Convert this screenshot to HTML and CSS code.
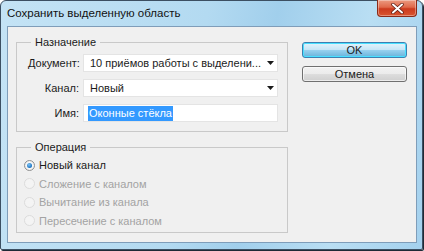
FILE: index.html
```html
<!DOCTYPE html>
<html lang="ru">
<head>
  <meta charset="UTF-8">
  <title>Сохранить выделенную область</title>
  <link rel="stylesheet" href="styles.css">
</head>
<body>
  <div class="window">
    <!-- Title bar -->
    <div class="titlebar">
      <span class="title">Сохранить выделенную область</span>
      <button class="close" type="button" aria-label="Закрыть">
        <svg width="13" height="11" viewBox="0 0 13 11">
          <path d="M2 1.5 L11 9.5 M11 1.5 L2 9.5" stroke="#5a1a10" stroke-width="3.4" stroke-linecap="round"/>
          <path d="M2 1.5 L11 9.5 M11 1.5 L2 9.5" stroke="#ffffff" stroke-width="2" stroke-linecap="round"/>
        </svg>
      </button>
    </div>

    <div class="client">
      <div class="groups">
        <fieldset class="group dest">
          <legend>Назначение</legend>
          <div class="row">
            <span class="label">Документ:</span>
            <div class="combo">
              <span>10 приёмов работы с выделени...</span>
              <svg class="arrow" width="7" height="4" viewBox="0 0 7 4"><path d="M0 0 H7 L3.5 4 Z" fill="#1a1a1a"/></svg>
            </div>
          </div>
          <div class="row">
            <span class="label">Канал:</span>
            <div class="combo">
              <span>Новый</span>
              <svg class="arrow" width="7" height="4" viewBox="0 0 7 4"><path d="M0 0 H7 L3.5 4 Z" fill="#1a1a1a"/></svg>
            </div>
          </div>
          <div class="row">
            <span class="label">Имя:</span>
            <div class="textbox"><span class="selected">Оконные стёкла</span></div>
          </div>
        </fieldset>

        <fieldset class="group operation">
          <legend>Операция</legend>
          <div class="radio checked"><span class="dot"></span>Новый канал</div>
          <div class="radio disabled"><span class="dot"></span>Сложение с каналом</div>
          <div class="radio disabled"><span class="dot"></span>Вычитание из канала</div>
          <div class="radio disabled"><span class="dot"></span>Пересечение с каналом</div>
        </fieldset>
      </div>

      <div class="buttons">
        <button class="btn default" type="button">OK</button>
        <button class="btn" type="button">Отмена</button>
      </div>
    </div>
  </div>
</body>
</html>
```

FILE: styles.css
```css
:root {
  --client-bg: #f0f0f0;
  --group-line: #c9c9c9;
  --text: #1b1b1b;
  --disabled: #a3a3a3;
  --highlight: #3399ff;
  --font-ui: "Liberation Sans", Arial, sans-serif;
}
*, *::before, *::after {
  box-sizing: border-box;
  margin: 0;
  padding: 0;
}
body {
  width: 424px;
  height: 251px;
  background: #ffffff;
  font-family: var(--font-ui);
  font-size: 11px;
  color: var(--text);
  overflow: hidden;
}
.window {
  width: 423px;
  height: 250px;
  display: flex;
  flex-direction: column;
  border: 1px solid #3c4f62;
  border-radius: 6px 6px 2px 2px;
  background: linear-gradient(100deg, #c4e3f5 0%, #b3daf1 45%, #a1cfec 60%, #b9def3 80%, #a4d1ee 100%);
  box-shadow: 1px 1px 0 #1e2a36;
}
.titlebar {
  height: 26px;
  display: flex;
  align-items: flex-start;
  justify-content: space-between;
  padding-left: 6px;
}
.title {
  margin-top: 6px;
  font-size: 11.5px;
  color: #111;
}
.close {
  width: 40px;
  height: 17px;
  margin-top: -1px;
  margin-right: 5px;
  display: flex;
  align-items: center;
  justify-content: center;
  border: 1px solid #8a2a18;
  border-top: none;
  border-radius: 0 0 4px 4px;
  background: linear-gradient(#eb9a80 0%, #e0694a 45%, #cc3a1d 55%, #d9552f 100%);
  box-shadow: inset 0 0 0 1px rgba(255,255,255,0.35);
}
.client {
  flex: 1;
  margin: 0 5px 6px 6px;
  background: var(--client-bg);
  border: 1px solid #7f9db9;
  display: flex;
  padding: 7px 9px 9px 8px;
}
.groups {
  display: flex;
  flex-direction: column;
  gap: 7px;
}
.group {
  width: 272px;
  border: 1px solid var(--group-line);
  padding: 0 8px 0 11px;
}
.group legend {
  margin-left: 3px;
  padding: 0 4px;
  line-height: 16px;
}
.dest {
  height: 98px;
  display: flex;
  flex-direction: column;
  gap: 7px;
  padding-top: 4px;
}
.row {
  display: flex;
  align-items: center;
  gap: 4px;
}
.label {
  width: 51px;
  text-align: right;
  white-space: nowrap;
}
.combo, .textbox {
  width: 195px;
  height: 18px;
  background: #ffffff;
  border: 1px solid #e4e4e4;
  display: flex;
  align-items: center;
  padding-left: 6px;
  white-space: nowrap;
}
.combo span {
  flex: 1;
  overflow: hidden;
}
.combo .arrow {
  flex-shrink: 0;
  margin: 0 3px 0 4px;
}
.textbox {
  padding-left: 4px;
}
.selected {
  background: var(--highlight);
  color: #ffffff;
  padding: 0 1px;
  line-height: 15px;
}
.operation {
  height: 94px;
  padding-top: 1px;
  padding-left: 7px;
}
.operation legend {
  margin-left: 7px;
}
.radio {
  height: 18.5px;
  display: flex;
  align-items: center;
  gap: 4px;
}
.radio .dot {
  width: 11px;
  height: 11px;
  border-radius: 50%;
  border: 1px solid #8e8f8f;
  background: radial-gradient(circle, #ffffff 30%, #e1e1e1 100%);
  display: flex;
  align-items: center;
  justify-content: center;
}
.radio.checked .dot::after {
  content: "";
  width: 5px;
  height: 5px;
  border-radius: 50%;
  background: radial-gradient(circle at 40% 35%, #7fc4f5 0%, #1a72c0 70%, #0c4f8f 100%);
}
.radio.disabled {
  color: var(--disabled);
}
.radio.disabled .dot {
  border-color: #dcdcdc;
  background: #f4f4f4;
}
.buttons {
  margin-left: 14px;
  display: flex;
  flex-direction: column;
  gap: 8px;
  padding-top: 8px;
}
.btn {
  width: 105px;
  height: 16px;
  font-family: var(--font-ui);
  font-size: 11px;
  line-height: 14px;
  color: var(--text);
  border: 1px solid #707070;
  border-radius: 3px;
  background: linear-gradient(#f2f2f2 0%, #ebebeb 50%, #dddddd 51%, #cfcfcf 100%);
  box-shadow: inset 0 0 0 1px rgba(255,255,255,0.6);
}
.btn.default {
  border-color: #3c7fb1;
  background: linear-gradient(#e5f4fc 0%, #c4e5f6 50%, #98d1ef 51%, #68b3db 100%);
  box-shadow: inset 0 0 0 1px #48e0ff;
}
```
